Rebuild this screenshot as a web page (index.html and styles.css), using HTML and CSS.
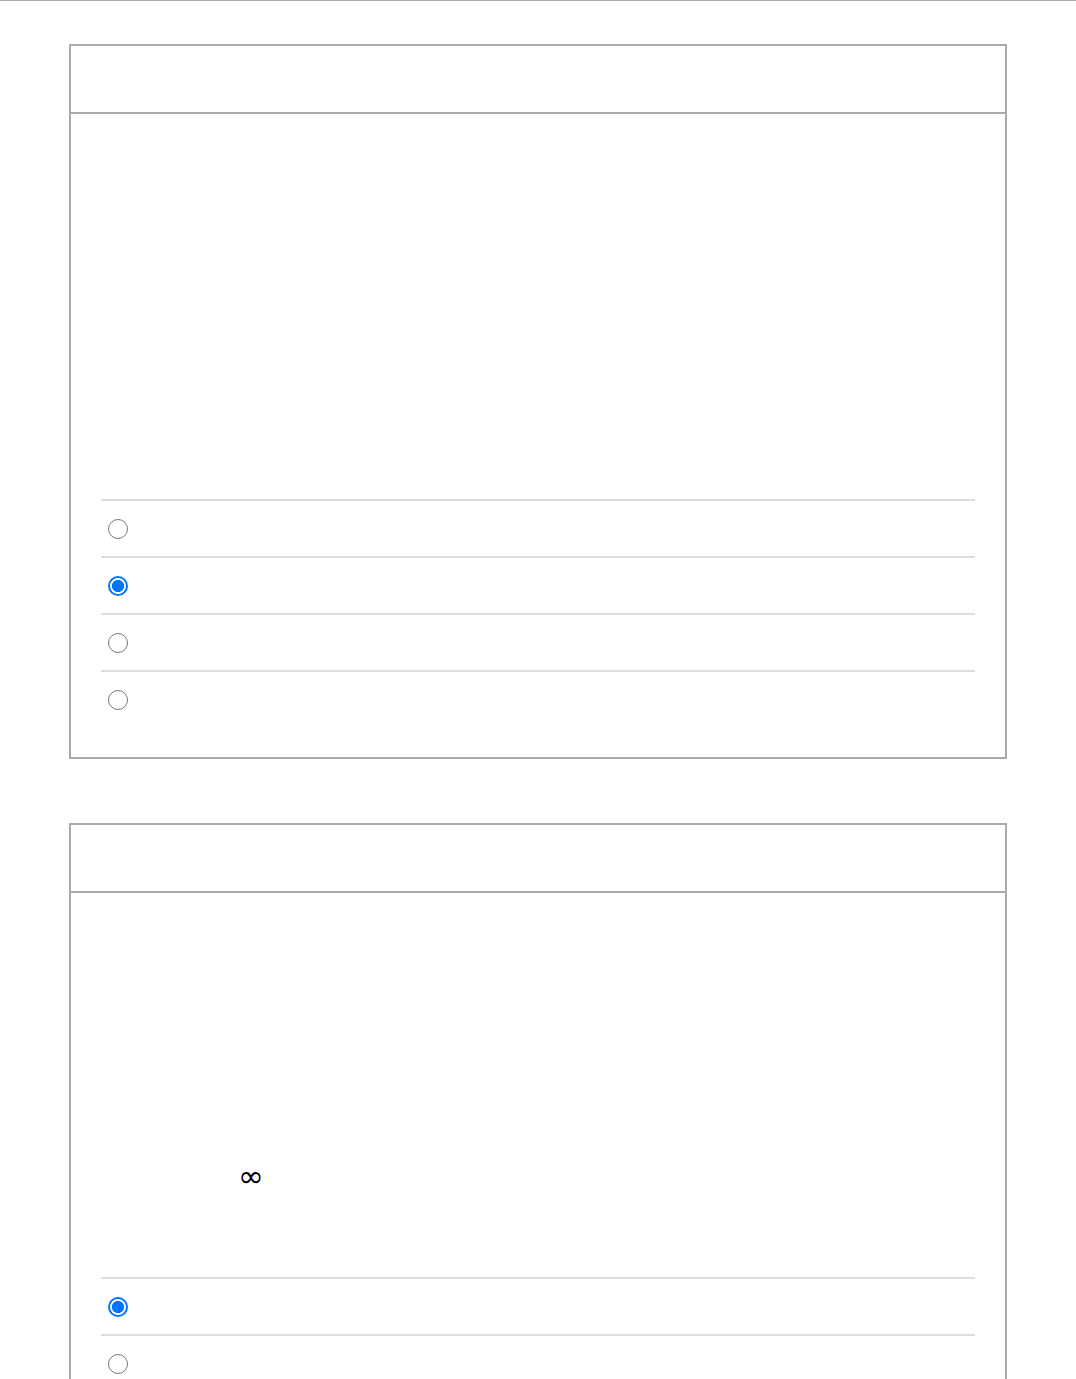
FILE: index.html
```html
<!DOCTYPE html>
<html>
<head>
<meta charset="utf-8">
<link rel="stylesheet" href="styles.css">
</head>
<body>
<div class="topbar"></div>
<main class="wrap">
  <section class="card">
    <header class="card-head"></header>
    <div class="card-body">
      <div class="content content-1"></div>
      <ul class="options">
        <li class="option"><input class="radio" type="radio" name="q1"></li>
        <li class="option"><input class="radio" type="radio" name="q1" checked></li>
        <li class="option"><input class="radio" type="radio" name="q1"></li>
        <li class="option"><input class="radio" type="radio" name="q1"></li>
      </ul>
    </div>
  </section>
  <section class="card">
    <header class="card-head"></header>
    <div class="card-body">
      <div class="content content-2">
        <div class="inf-line"><span class="inf">∞</span></div>
      </div>
      <ul class="options">
        <li class="option"><input class="radio" type="radio" name="q2" checked></li>
        <li class="option"><input class="radio" type="radio" name="q2"></li>
      </ul>
    </div>
  </section>
</main>
</body>
</html>
```
FILE: styles.css
```css
html, body {
  margin: 0;
  padding: 0;
  background: #fff;
  font-family: "Liberation Sans", Arial, sans-serif;
}
.topbar {
  height: 1px;
  background: #aaa;
}
.wrap {
  width: 938px;
  margin: 43px auto 0;
  display: flex;
  flex-direction: column;
  gap: 64px;
}
.card {
  border: 2px solid #aaa;
  background: #fff;
}
.card-head {
  height: 66px;
  border-bottom: 2px solid #aaa;
}
.card-body {
  padding: 30px 30px 30px;
}
.content-1 { height: 355px; }
.content-2 { height: 354px; }
.inf-line {
  padding-top: 238px;
  padding-left: 137px;
  height: 30px;
  display: flex;
  align-items: center;
}
.inf {
  font-family: "DejaVu Sans", sans-serif;
  font-size: 31px;
  line-height: 1;
  color: #000;
}
.options {
  list-style: none;
  margin: 0;
  padding: 0;
}
.option {
  border-top: 2px solid #dddddd;
  height: 55px;
  display: flex;
  align-items: center;
  padding-left: 7px;
}
.radio {
  -webkit-appearance: none;
  appearance: none;
  box-sizing: border-box;
  width: 20px;
  height: 20px;
  margin: 0;
  border: 1.5px solid #767676;
  border-radius: 50%;
  background: #fff;
}
.radio:checked {
  border: 2px solid #0075ff;
  background: radial-gradient(circle, #0075ff 0 5.8px, #fff 6.4px);
}
```
